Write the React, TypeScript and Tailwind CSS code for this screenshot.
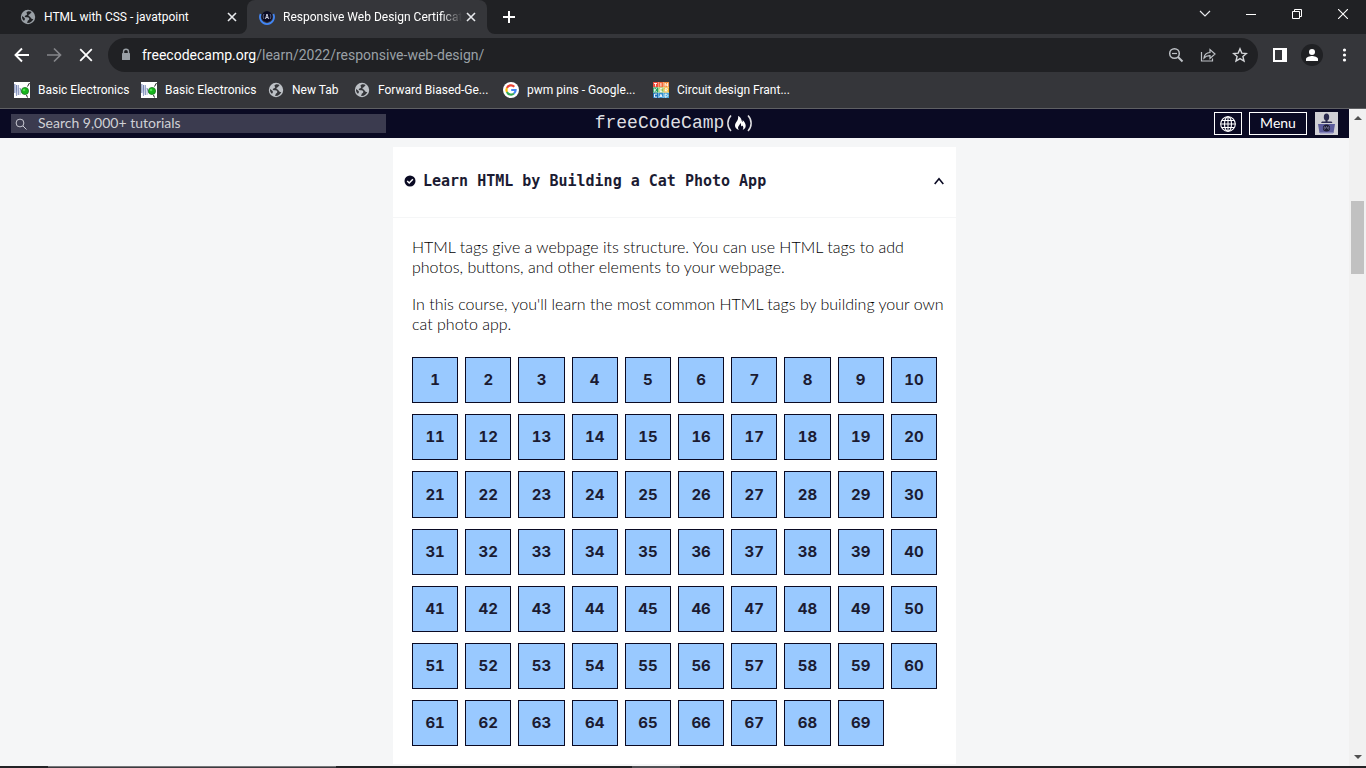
import React from "react";

const chromeFont = "font-['Roboto','Noto_Sans',sans-serif]";
const steps = Array.from({ length: 69 }, (_, i) => i + 1);

function Globe({ dark }: { dark?: boolean }) {
  return (
    <svg viewBox="0 0 16 16" className="size-4 shrink-0" aria-hidden="true">
      <circle cx="8" cy="8" r="7.2" fill={dark ? "#9aa0a6" : "#bdc1c6"} />
      <path
        d="M8.4 2.200C6.500 2.500 6 3.800 7 4.700c.6.700-.4 1.500-1.500 1.700-1.200.3-.9 1.800.3 1.900 2 .1 3.600.2 3.500 1.700-.1 1.200-1.500 1.200-1.700 2.200-.1.700-.2 1.300-.6 1.800 3.400.2 5.400-1.600 6.300-4-1.300.4-2.200-.6-2.900-1.800-.8-1-2-.8-2-1.900 0-.9 1.700-.8 2-1.800.2-.7.800-1.300 1.300-1.600-1-.5-2.200-.8-3.300-.7zM2 7c.9.900 2 1.100 2.600 1.900.7.900.2 2-.7 2.800C2.300 10.500 1.800 8.700 2 7z"
        fill={dark ? "#202124" : "#35363a"}
      />
    </svg>
  );
}

function WaveIcon() {
  return (
    <svg viewBox="0 0 16 16" className="size-4 shrink-0" aria-hidden="true">
      <rect width="16" height="16" fill="#fff" />
      <path d="M.8 2v9M2.500 3v11M4.300 3v10M6 6l1.500 5" fill="none" stroke="#7786b4" strokeWidth="1" />
      <path d="M.8 2l1.700 12 1.800-11L6 13l1.500-5" fill="none" stroke="#a3aed0" strokeWidth=".5" />
      <path d="M13.500 4.500L15.500 1M12.500 13l1 2.500" stroke="#222" strokeWidth="1" />
      <circle cx="11" cy="9" r="3.600" fill="#16b51c" stroke="#176b1b" strokeWidth=".7" />
      <circle cx="10" cy="8" r="1.300" fill="#4ee04e" />
    </svg>
  );
}

function GoogleIcon() {
  return (
    <svg viewBox="0 0 16 16" className="size-4 shrink-0" aria-hidden="true">
      <circle cx="8" cy="8" r="8" fill="#fff" />
      <g fill="none" strokeWidth="2.200">
        <path d="M11.300 4.700A4.600 4.600 0 0 0 3.900 6" stroke="#ea4335" />
        <path d="M3.900 6a4.600 4.600 0 0 0 0 4" stroke="#fbbc05" />
        <path d="M3.900 10a4.600 4.600 0 0 0 7.100 1.500" stroke="#34a853" />
        <path d="M11 11.500A4.500 4.500 0 0 0 12.600 8H8.200" stroke="#4285f4" />
      </g>
    </svg>
  );
}

function TinkercadIcon() {
  const colors = ["#ee4b3c", "#f26a3d", "#f58f3a", "#22a05a", "#8cc152", "#f0b429", "#1b6fb5", "#2f8fd0", "#4aa8dc"];
  const marks = [
    "M1 1.500h3M2.500 1.500v3",
    "M2.500 1v3.500",
    "M1.300 4.500V1.300l2.500 3V1",
    "M1.300 1v3.500M3.800 1L1.500 2.700l2.300 1.800",
    "M4 1.200H1.500v3H4M1.500 2.700h2",
    "M1.300 4.500V1.300h2.200v1.500H1.500l2.300 1.700",
    "M4 1.300H1.500v3H4",
    "M1.200 4.500l1.300-3 1.300 3M1.500 3.500h2",
    "M1.300 1.300v3h1.300L4 2.800 2.600 1.300z",
  ];
  return (
    <svg viewBox="0 0 16 16" className="size-4 shrink-0" aria-hidden="true">
      <rect width="16" height="16" fill="#fff" />
      {colors.map((c, i) => (
        <g key={c} transform={`translate(${(i % 3) * 5.4} ${Math.floor(i / 3) * 5.4})`}>
          <rect width="5.200" height="5.200" fill={c} />
          <path d={marks[i]} fill="none" stroke="#fff" strokeWidth=".9" />
        </g>
      ))}
    </svg>
  );
}

function CampTabIcon() {
  return (
    <svg viewBox="0 0 16 16" className="size-4 shrink-0" aria-hidden="true">
      <circle cx="8" cy="7.500" r="5.400" fill="#0a0a23" />
      <path d="M1.700 5A7 7 0 1 0 14.300 5" fill="none" stroke="#4285f4" strokeWidth="1.800" />
      <path d="M5 5c-1.100 1.600-1.100 3.400 0 5M11 5c1.100 1.600 1.100 3.400 0 5" fill="none" stroke="#8f92b0" strokeWidth=".7" />
      <path d="M6.500 10L8 5l1.500 5M7 8.500h2" fill="none" stroke="#d9dbea" strokeWidth=".9" />
    </svg>
  );
}

function CloseIcon() {
  return (
    <svg viewBox="0 0 10 10" className="size-[10px]" aria-hidden="true">
      <path d="M1 1l8 8M9 1L1 9" stroke="#e8eaed" strokeWidth="1.600" />
    </svg>
  );
}

function TabStrip() {
  return (
    <div className="flex h-[34px] items-stretch bg-[#202124] text-white">
      <div className="flex w-[247px] shrink-0 items-center pl-5 pr-[10px]">
        <Globe dark />
        <span className="ml-2 grow truncate text-xs">HTML with CSS - javatpoint</span>
        <button aria-label="Close tab" className="grid size-[10px] place-items-center"><CloseIcon /></button>
      </div>
      <div className="relative flex w-[240px] shrink-0 items-center rounded-t-lg bg-[#35363a] pl-3 pr-[11px]">
        <svg viewBox="0 0 8 8" className="absolute -left-2 bottom-0 size-2" aria-hidden="true"><path d="M8 0v8H0a8 8 0 0 0 8-8z" fill="#35363a" /></svg>
        <svg viewBox="0 0 8 8" className="absolute -right-2 bottom-0 size-2" aria-hidden="true"><path d="M0 0v8h8a8 8 0 0 1-8-8z" fill="#35363a" /></svg>
        <CampTabIcon />
        <span className="ml-2 whitespace-nowrap text-xs [mask-image:linear-gradient(to_right,#000_88%,transparent)]">
          Responsive Web Design Certificat
        </span>
        <button aria-label="Close tab" className="ml-auto grid size-[10px] place-items-center"><CloseIcon /></button>
      </div>
      <button aria-label="New tab" className="grid w-11 place-items-center">
        <svg viewBox="0 0 12 12" className="size-3" aria-hidden="true"><path d="M6 0v12M0 6h12" stroke="#fff" strokeWidth="2" /></svg>
      </button>
      <div className="ml-auto flex items-center pb-[6px]">
        <button aria-label="Search tabs" className="grid w-[46px] place-items-center">
          <svg viewBox="0 0 12 8" className="h-2 w-3" aria-hidden="true"><path d="M1 1l5 5 5-5" fill="none" stroke="#e8eaed" strokeWidth="1.200" /></svg>
        </button>
        <button aria-label="Minimize" className="grid w-[46px] place-items-center">
          <svg viewBox="0 0 10 10" className="size-[10px]" aria-hidden="true"><path d="M0 5.500h10" stroke="#fff" /></svg>
        </button>
        <button aria-label="Restore" className="grid w-[46px] place-items-center">
          <svg viewBox="0 0 10 10" className="size-[10px]" aria-hidden="true"><path d="M.5 2.500h7v7h-7zM2.500 2V.5h7v7H8" fill="none" stroke="#fff" /></svg>
        </button>
        <button aria-label="Close window" className="grid w-[46px] place-items-center">
          <svg viewBox="0 0 10 10" className="size-[10px]" aria-hidden="true"><path d="M0 0l10 10M10 0L0 10" stroke="#fff" strokeWidth="1.100" /></svg>
        </button>
      </div>
    </div>
  );
}

function Toolbar() {
  return (
    <div className="flex h-[42px] items-center bg-[#35363a] pl-[14px] pr-[13px]">
      <button aria-label="Back">
        <svg viewBox="0 0 16 16" className="size-4" aria-hidden="true"><path d="M15 8H2M8 1.500L1.500 8 8 14.500" fill="none" stroke="#fff" strokeWidth="1.900" /></svg>
      </button>
      <button aria-label="Forward" className="ml-4">
        <svg viewBox="0 0 16 16" className="size-4" aria-hidden="true"><path d="M1 8h13M8 1.500L14.500 8 8 14.500" fill="none" stroke="#85868a" strokeWidth="1.700" /></svg>
      </button>
      <button aria-label="Stop" className="ml-4">
        <svg viewBox="0 0 16 16" className="size-4" aria-hidden="true"><path d="M2.200 2.200l11.600 11.600M13.800 2.200L2.200 13.800" stroke="#fff" strokeWidth="1.800" /></svg>
      </button>
      <div className="ml-[14px] flex h-[34px] grow items-center rounded-full bg-[#202124] pl-3 pr-[10px]">
        <svg viewBox="0 0 12 14" className="h-[14px] w-3" aria-hidden="true">
          <path d="M3.500 5V3.800a2.500 2.500 0 0 1 5 0V5" fill="none" stroke="#9aa0a6" strokeWidth="1.400" />
          <rect x="2" y="5" width="8" height="7" rx=".6" fill="#9aa0a6" />
        </svg>
        <a href="#address" className="ml-[10px] whitespace-nowrap text-sm text-[#9aa0a6]"><span className="text-white">freecodecamp.org</span>/learn/2022/responsive-web-design/</a>
        <div className="ml-auto flex items-center gap-4">
          <button aria-label="Zoom">
            <svg viewBox="0 0 16 16" className="size-4" fill="none" stroke="#bdc1c6" aria-hidden="true">
              <circle cx="6.500" cy="6.500" r="4.800" strokeWidth="1.500" /><path d="M4 6.500h5" strokeWidth="1.200" /><path d="M10 10l4.500 4.500" strokeWidth="2" />
            </svg>
          </button>
          <button aria-label="Share">
            <svg viewBox="0 0 16 16" className="size-4" fill="none" stroke="#bdc1c6" strokeWidth="1.200" aria-hidden="true">
              <path d="M1.500 5v9h11v-2.500" /><path d="M4 11c.3-3.500 2.300-5.300 6-5.500V2.500L15 7l-5 4.500V8.600C7.300 8.500 5.500 9.200 4 11z" />
            </svg>
          </button>
          <button aria-label="Bookmark this tab">
            <svg viewBox="0 0 16 16" className="size-4" aria-hidden="true"><path d="M8 1.800l1.800 4.300 4.600.4-3.500 3 1.100 4.500-4-2.400-4 2.400 1.100-4.500-3.500-3 4.600-.4z" fill="none" stroke="#d5d7da" strokeWidth="1.400" /></svg>
          </button>
        </div>
      </div>
      <button aria-label="Side panel" className="ml-[15px]">
        <svg viewBox="0 0 14 14" className="size-[14px]" aria-hidden="true"><path d="M1 1h12v12H1z" fill="none" stroke="#fff" strokeWidth="2" /><path d="M9 0h5v14H9z" fill="#fff" /></svg>
      </button>
      <button aria-label="Profile" className="ml-[14px] grid size-[22px] place-items-center rounded-full bg-[#202124]">
        <svg viewBox="0 0 14 14" className="size-[14px]" aria-hidden="true"><circle cx="7" cy="4" r="3" fill="#fff" /><path d="M1 13v-2c0-2 4-3 6-3s6 1 6 3v2z" fill="#fff" /></svg>
      </button>
      <button aria-label="Browser menu" className="ml-[14px]">
        <svg viewBox="0 0 16 16" className="size-4" fill="#fff" aria-hidden="true"><circle cx="7.500" cy="3" r="1.600" /><circle cx="7.500" cy="8" r="1.600" /><circle cx="7.500" cy="13" r="1.600" /></svg>
      </button>
    </div>
  );
}

function Bookmarks() {
  const items = [
    { icon: <WaveIcon />, label: "Basic Electronics", w: "w-[127px]" },
    { icon: <WaveIcon />, label: "Basic Electronics", w: "w-[127px]" },
    { icon: <Globe />, label: "New Tab", w: "w-[86px]" },
    { icon: <Globe />, label: "Forward Biased-Ge...", w: "w-[149px]" },
    { icon: <GoogleIcon />, label: "pwm pins - Google...", w: "w-[150px]" },
    { icon: <TinkercadIcon />, label: "Circuit design Frant...", w: "w-[150px]" },
  ];
  return (
    <nav aria-label="Bookmarks" className="flex h-[33px] items-center border-b border-[#5f6063] bg-[#35363a] pb-1 pl-[14px] text-xs text-white">
      {items.map((b, i) => (
        <a key={i} href="#bookmark" className={`flex shrink-0 items-center gap-2 whitespace-nowrap ${b.w}`}>
          {b.icon}
          {b.label}
        </a>
      ))}
    </nav>
  );
}

function SiteHeader() {
  return (
    <header className="grid h-[29px] grid-cols-[1fr_auto_1fr] items-center bg-[#0a0a23] px-[11px] text-white">
      <div className="flex h-[19px] w-[375px] items-center bg-[#3b3b4f]">
        <svg viewBox="0 0 12 12" className="ml-1 size-3" fill="none" stroke="#c8c8d2" aria-hidden="true"><circle cx="5" cy="5" r="3.900" /><path d="M8 8l3.500 3.500" /></svg>
        <input
          aria-label="Search tutorials"
          placeholder="Search 9,000+ tutorials"
          className="ml-[11px] h-[18px] w-0 grow bg-transparent pb-[2px] text-sm leading-4 outline-none placeholder:text-[#d0d0d5]"
        />
      </div>
      <a href="#home" className="flex items-center pb-[2px] font-['Liberation_Mono',monospace] text-lg leading-6 text-[#dfdfe2]">
        freeCodeCamp
        <svg viewBox="0 0 30 20" className="h-5 w-[30px]" aria-hidden="true">
          <path d="M7 2.500C2.800 7 2.800 13.500 7 18M24 2.500c4.200 4.500 4.200 11 0 15.500" fill="none" stroke="currentColor" strokeWidth="1.500" />
          <path d="M14 3c3.500 1.500 3.200 4 4.300 6 .5-.4.500-1.200.2-2 2 1.700 3.200 3.800 3.200 5.800 0 2-1.200 3.400-3 4 1-1.500.8-3-.3-4.200-.3.900-.9 1-1.200.3-.3-1 0-2-.8-2.800-.3 2-2.600 3-2.400 5 .1.800.4 1.400 1 1.900-2.500-.5-4-2.200-4-4.400 0-3.400 4-5 3-9.600z" fill="#fff" />
        </svg>
      </a>
      <div className="flex items-center justify-self-end">
        <button aria-label="Change language" className="grid h-[23px] w-7 place-items-center border border-white">
          <svg viewBox="0 0 16 16" className="size-4" fill="none" stroke="#fff" strokeWidth="1.100" aria-hidden="true">
            <circle cx="8" cy="8" r="7.300" /><ellipse cx="8" cy="8" rx="3.500" ry="7.300" /><path d="M8 .5v15M.5 8h15M1.800 4.500h12.400M1.800 11.500h12.400" />
          </svg>
        </button>
        <button className="ml-[7px] h-[23px] w-[58px] border border-white pb-[2px] text-sm leading-5">Menu</button>
        <a href="#profile" aria-label="Your profile" className="ml-2">
          <svg viewBox="0 0 23 23" className="size-[23px]" aria-hidden="true">
            <rect width="23" height="23" fill="#d0d0d5" />
            <ellipse cx="11.500" cy="5" rx="2.700" ry="3.500" fill="#2a2a4f" />
            <path d="M10.500 8h2v1.500h4l1 1.500H6l1-1.500h3.500z" fill="#2a2a4f" />
            <path d="M3 12h17l-1.500 9h-14z" fill="#5c5c9c" />
            <rect x="5" y="20" width="13" height="1.500" fill="#8585bb" />
            <circle cx="11.500" cy="16" r="3.600" fill="#1b1b32" />
            <path d="M9.500 17.500l2-3 2 3M9.500 14.500l-.5 2M13.500 14.500l.5 2" stroke="#9a9ac0" strokeWidth=".7" fill="none" />
          </svg>
        </a>
      </div>
    </header>
  );
}

function CourseCard() {
  return (
    <section className="mx-auto w-full max-w-[563px] bg-white text-[#0a0a23]">
      <button className="flex h-[71px] w-full items-center border-b border-[#f5f6f7] pb-[2px] pl-[11px] pr-3 text-left" aria-expanded="true">
        <svg viewBox="0 0 12 12" className="size-3" aria-hidden="true"><circle cx="6" cy="6" r="5.500" fill="#0a0a23" /><path d="M3.200 6l2 2 3.700-3.800" fill="none" stroke="#fff" strokeWidth="1.500" /></svg>
        <h3 className="ml-[7px] grow font-['DejaVu_Sans_Mono',monospace] text-[15px] font-bold leading-5 text-[#1b1b32]">
          Learn HTML by Building a Cat Photo App
        </h3>
        <svg viewBox="0 0 10 8" className="h-2 w-[10px]" aria-hidden="true"><path d="M.7 7L5 1.800 9.300 7" fill="none" stroke="#0a0a23" strokeWidth="1.600" /></svg>
      </button>
      <div className="pb-[18px] pl-[19px] pt-[19px]">
        <div className="flex flex-col gap-[17px] pr-[7px] text-base font-light leading-5 text-black">
          <p>HTML tags give a webpage its structure. You can use HTML tags to add photos, buttons, and other elements to your webpage.</p>
          <p>In this course, you'll learn the most common HTML tags by building your own cat photo app.</p>
        </div>
        <ol className="mt-[23px] grid grid-cols-10 gap-x-[7px] gap-y-[11px] pr-[19px]">
          {steps.map((n) => (
            <li key={n}>
              <a href={`#step-${n}`} className="flex aspect-square items-center justify-center border border-[#0a0a23] bg-[#99c9ff] font-['Inter',sans-serif] text-[15px] font-bold tabular-nums leading-5 text-[#1b1b32]">
                {n}
              </a>
            </li>
          ))}
        </ol>
      </div>
    </section>
  );
}

function Scrollbar() {
  return (
    <div className="flex w-[17px] shrink-0 flex-col items-center bg-[#f1f1f1] py-[7px]" aria-hidden="true">
      <svg viewBox="0 0 8 4" className="h-1 w-2"><path d="M0 4l4-4 4 4z" fill="#505050" /></svg>
      <div className="mt-[81px] h-[73px] w-[13px] bg-[#c1c1c1]" />
      <svg viewBox="0 0 8 4" className="mt-auto h-1 w-2"><path d="M0 0l4 4 4-4z" fill="#505050" /></svg>
    </div>
  );
}

export default function App() {
  return (
    <div className={`flex h-screen flex-col overflow-hidden ${chromeFont}`}>
      <TabStrip />
      <Toolbar />
      <Bookmarks />
      <div className="flex min-h-0 grow font-['Lato',sans-serif]">
        <div className="flex min-w-0 grow flex-col bg-[#f5f6f7]">
          <SiteHeader />
          <main className="min-h-0 grow overflow-hidden pt-[9px]">
            <CourseCard />
          </main>
        </div>
        <Scrollbar />
      </div>
      <footer className="flex h-[2px] shrink-0 bg-[#232326]">
        <div className="ml-12 w-72 border-t border-[#77777a] bg-[#3c3c40]" />
        <div className="ml-[296px] w-12 bg-[#505054]" />
      </footer>
    </div>
  );
}
